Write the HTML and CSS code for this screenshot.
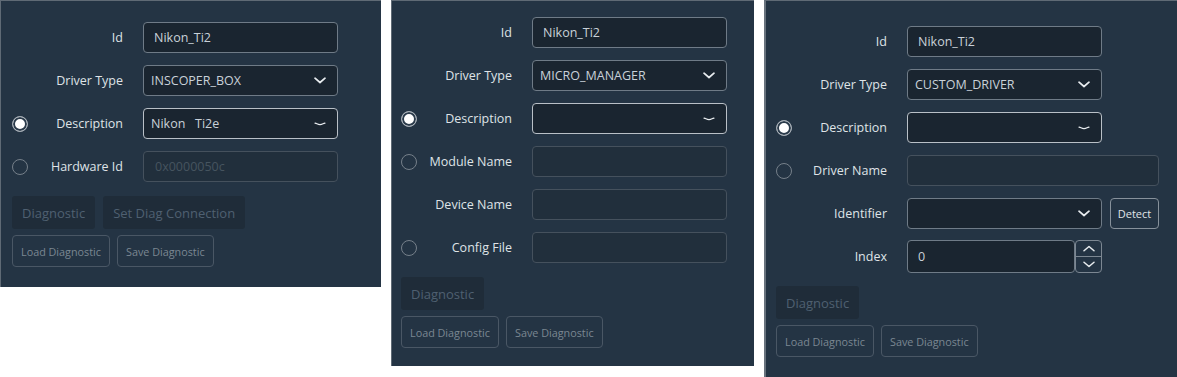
FILE: index.html
```html
<!DOCTYPE html>
<html>
<head>
<meta charset="utf-8">
<link rel="stylesheet" href="styles.css">
</head>
<body>
<div class="page">

  <section class="panel panel-a">
    <div class="form">
      <div class="row"><span class="radio-slot"></span><span class="label">Id</span><div class="field">Nikon_Ti2</div></div>
      <div class="row"><span class="radio-slot"></span><span class="label">Driver Type</span><div class="field select"><span>INSCOPER_BOX</span><svg class="chev" width="12" height="7" viewBox="0 0 12 7"><path d="M1 1.2l5 4.3 5-4.3" /></svg></div></div>
      <div class="row"><span class="radio-slot radio on"></span><span class="label">Description</span><div class="field select focus"><span>Nikon&nbsp;&nbsp;&nbsp;Ti2e</span><svg class="chev thin" width="12" height="6" viewBox="0 0 12 6"><path d="M1 2.2q1 .2 2 .6 3 1.6 6 0 1-.4 2-.6" /></svg></div></div>
      <div class="row"><span class="radio-slot radio"></span><span class="label">Hardware Id</span><div class="field disabled">0x0000050c</div></div>
    </div>
    <div class="actions">
      <div class="btn-row"><button class="btn-main">Diagnostic</button><button class="btn-main">Set Diag Connection</button></div>
      <div class="btn-row small"><button class="btn-sm">Load Diagnostic</button><button class="btn-sm">Save Diagnostic</button></div>
    </div>
  </section>

  <section class="panel panel-b">
    <div class="form">
      <div class="row"><span class="radio-slot"></span><span class="label">Id</span><div class="field">Nikon_Ti2</div></div>
      <div class="row"><span class="radio-slot"></span><span class="label">Driver Type</span><div class="field select"><span>MICRO_MANAGER</span><svg class="chev" width="12" height="7" viewBox="0 0 12 7"><path d="M1 1.2l5 4.3 5-4.3" /></svg></div></div>
      <div class="row"><span class="radio-slot radio on"></span><span class="label">Description</span><div class="field select focus"><span></span><svg class="chev thin" width="12" height="6" viewBox="0 0 12 6"><path d="M1 2.2q1 .2 2 .6 3 1.6 6 0 1-.4 2-.6" /></svg></div></div>
      <div class="row"><span class="radio-slot radio"></span><span class="label">Module Name</span><div class="field disabled"></div></div>
      <div class="row"><span class="radio-slot"></span><span class="label">Device Name</span><div class="field disabled"></div></div>
      <div class="row"><span class="radio-slot radio"></span><span class="label">Config File</span><div class="field disabled"></div></div>
    </div>
    <div class="actions">
      <div class="btn-row"><button class="btn-main">Diagnostic</button></div>
      <div class="btn-row small"><button class="btn-sm">Load Diagnostic</button><button class="btn-sm">Save Diagnostic</button></div>
    </div>
  </section>

  <section class="panel panel-c">
    <div class="form">
      <div class="row"><span class="radio-slot"></span><span class="label">Id</span><div class="field">Nikon_Ti2</div></div>
      <div class="row"><span class="radio-slot"></span><span class="label">Driver Type</span><div class="field select"><span>CUSTOM_DRIVER</span><svg class="chev" width="12" height="7" viewBox="0 0 12 7"><path d="M1 1.2l5 4.3 5-4.3" /></svg></div></div>
      <div class="row"><span class="radio-slot radio on"></span><span class="label">Description</span><div class="field select focus"><span></span><svg class="chev thin" width="12" height="6" viewBox="0 0 12 6"><path d="M1 2.2q1 .2 2 .6 3 1.6 6 0 1-.4 2-.6" /></svg></div></div>
      <div class="row"><span class="radio-slot radio"></span><span class="label">Driver Name</span><div class="field disabled wide"></div></div>
      <div class="row"><span class="radio-slot"></span><span class="label">Identifier</span>
        <div class="combo">
          <div class="field select"><span></span><svg class="chev" width="12" height="7" viewBox="0 0 12 7"><path d="M1 1.2l5 4.3 5-4.3" /></svg></div>
          <button class="btn-detect">Detect</button>
        </div>
      </div>
      <div class="row"><span class="radio-slot"></span><span class="label">Index</span>
        <div class="spin">
          <div class="field spin-input">0</div>
          <div class="spin-btns">
            <span class="spin-btn"><svg width="12" height="7" viewBox="0 0 12 7"><path d="M1 5.8l5-4.3 5 4.3" /></svg></span>
            <span class="spin-btn"><svg width="12" height="7" viewBox="0 0 12 7"><path d="M1 1.2l5 4.3 5-4.3" /></svg></span>
          </div>
        </div>
      </div>
    </div>
    <div class="actions">
      <div class="btn-row"><button class="btn-main">Diagnostic</button></div>
      <div class="btn-row small"><button class="btn-sm">Load Diagnostic</button><button class="btn-sm">Save Diagnostic</button></div>
    </div>
  </section>

</div>
</body>
</html>
```

FILE: styles.css
```css
* { box-sizing: border-box; }

body {
  margin: 0;
  background: #ffffff;
  font-family: "Open Sans", "Noto Sans", sans-serif;
}

.page {
  display: flex;
  align-items: flex-start;
  gap: 10px;
}

.panel {
  background: #243444;
  border-top: 1px solid #5f6a75;
  border-left: 1px solid #5f6a75;
  display: flex;
  flex-direction: column;
  flex: none;
}

.panel-a { width: 381px; height: 287px; padding: 21px 0 0 11px; }
.panel-b { width: 363px; height: 366px; padding: 16px 0 0 9px; }
.panel-c { width: 413px; height: 377px; padding: 25px 0 0 10px; border-left: 2px solid #68727d; }

.form {
  display: flex;
  flex-direction: column;
  gap: 12px;
}

.row {
  display: flex;
  align-items: center;
  height: 31px;
}

.radio-slot {
  width: 16px;
  height: 16px;
  flex: none;
}

.radio {
  border-radius: 50%;
  border: 1px solid #76808a;
}

.radio.on {
  border: 1px solid #a3abb3;
  background: #ffffff;
  box-shadow: inset 0 0 0 2px #2b3b4b;
}

.label {
  width: 95px;
  margin-right: 20px;
  text-align: right;
  color: #dfe3e7;
  font-size: 12.5px;
  white-space: nowrap;
}

.field {
  width: 195px;
  height: 31px;
  flex: none;
  display: flex;
  align-items: center;
  padding: 0 10px;
  background: #1a2530;
  border: 1px solid #6f7b87;
  border-radius: 4px;
  color: #c9d1d9;
  font-size: 12.5px;
  white-space: nowrap;
}

.select {
  justify-content: space-between;
  padding: 0 11px 0 7px;
}

.select.focus {
  border-color: #b9c0c7;
}

.field.disabled {
  background: #212f3c;
  border-color: #45515d;
  color: #46545f;
  padding-left: 11px;
}

.field.wide { width: 252px; }

.chev path {
  fill: none;
  stroke: #e8ecef;
  stroke-width: 1.7;
  stroke-linecap: round;
  stroke-linejoin: round;
}

.chev.thin path {
  stroke-width: 1.2;
}

.combo {
  display: flex;
  gap: 8px;
}

.btn-detect {
  width: 49px;
  height: 31px;
  padding: 0;
  background: transparent;
  border: 1px solid #87919b;
  border-radius: 4px;
  color: #e0e5e9;
  font-family: inherit;
  font-size: 11px;
}

.spin {
  display: flex;
  height: 33px;
}

.spin-input {
  width: 168px;
  height: 33px;
}

.spin-btns {
  width: 27px;
  height: 33px;
  display: flex;
  flex-direction: column;
  border: 1px solid #7c8792;
  border-radius: 4px;
}

.spin-btn {
  flex: 1;
  display: flex;
  align-items: center;
  justify-content: center;
}

.spin-btn + .spin-btn {
  border-top: 1px solid #7c8792;
}

.spin-btn path {
  fill: none;
  stroke: #e8ecef;
  stroke-width: 1.5;
  stroke-linecap: round;
  stroke-linejoin: round;
}

.actions {
  margin-top: 14px;
  display: flex;
  flex-direction: column;
  gap: 6px;
}

.btn-row {
  display: flex;
  gap: 8px;
}

.btn-row.small { gap: 7px; }

.btn-main {
  height: 33px;
  padding: 0 10px;
  background: #1f2c39;
  border: none;
  border-radius: 3px;
  color: #4f6071;
  font-family: inherit;
  font-size: 13px;
}

.btn-sm {
  height: 32px;
  padding: 0 8px;
  background: transparent;
  border: 1px solid #4a5765;
  border-radius: 4px;
  color: #7b8792;
  font-family: inherit;
  font-size: 10.8px;
}
```
